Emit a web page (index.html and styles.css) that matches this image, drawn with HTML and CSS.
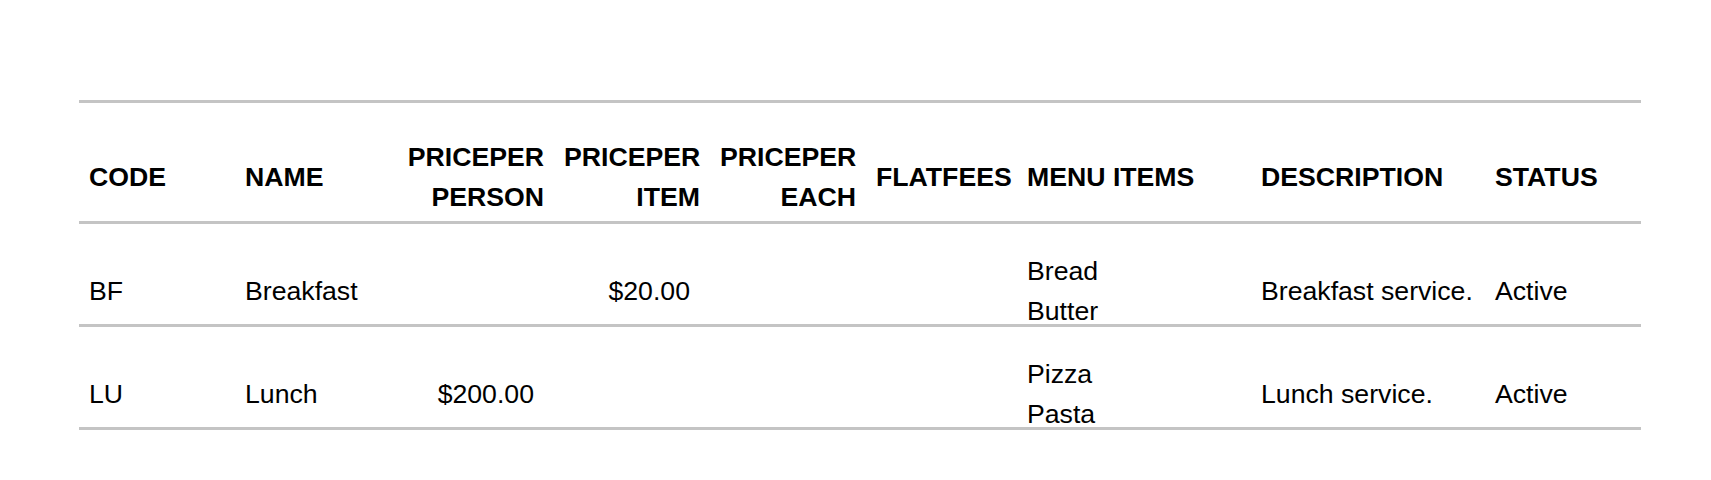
FILE: index.html
```html
<!DOCTYPE html>
<html>
<head>
<meta charset="utf-8">
<link rel="stylesheet" href="styles.css">
</head>
<body>
<div class="page">
  <table class="grid">
    <colgroup>
      <col class="w-code">
      <col class="w-name">
      <col class="w-pp">
      <col class="w-pi">
      <col class="w-pe">
      <col class="w-ff">
      <col class="w-menu">
      <col class="w-desc">
      <col class="w-status">
    </colgroup>
    <thead>
      <tr>
        <th>CODE</th>
        <th>NAME</th>
        <th class="num">PRICEPER PERSON</th>
        <th class="num">PRICEPER ITEM</th>
        <th class="num">PRICEPER EACH</th>
        <th>FLATFEES</th>
        <th>MENU ITEMS</th>
        <th>DESCRIPTION</th>
        <th>STATUS</th>
      </tr>
    </thead>
    <tbody>
      <tr>
        <td>BF</td>
        <td>Breakfast</td>
        <td class="num"></td>
        <td class="num">$20.00</td>
        <td class="num"></td>
        <td></td>
        <td class="menu"><div class="items"><div class="item">Bread</div><div class="item">Butter</div></div></td>
        <td>Breakfast service.</td>
        <td>Active</td>
      </tr>
      <tr>
        <td>LU</td>
        <td>Lunch</td>
        <td class="num">$200.00</td>
        <td class="num"></td>
        <td class="num"></td>
        <td></td>
        <td class="menu"><div class="items"><div class="item">Pizza</div><div class="item">Pasta</div></div></td>
        <td>Lunch service.</td>
        <td>Active</td>
      </tr>
    </tbody>
  </table>
</div>
</body>
</html>
```

FILE: styles.css
```css
html, body {
  margin: 0;
  padding: 0;
  background: #ffffff;
}

.page {
  padding: 100px 70px 0 79px;
  font-family: "Liberation Sans", Arial, sans-serif;
  color: #000000;
}

.grid {
  width: 1562px;
  border-collapse: collapse;
  table-layout: fixed;
  font-size: 26.67px;
  line-height: 40px;
}

.w-code { width: 156px; }
.w-name { width: 161px; }
.w-pp { width: 158px; }
.w-pi { width: 156px; }
.w-pe { width: 156px; }
.w-ff { width: 151px; }
.w-menu { width: 234px; }
.w-desc { width: 234px; }
.w-status { width: 156px; }

.grid thead tr {
  border-top: 3px solid #c4c4c4;
  border-bottom: 3px solid #c4c4c4;
}

.grid tbody tr {
  border-bottom: 3px solid #c4c4c4;
}

.grid th {
  font-weight: bold;
  text-align: left;
  vertical-align: middle;
  padding: 34px 10px 4px 10px;
  white-space: normal;
}

.grid th.num {
  text-align: right;
}

.grid td {
  text-align: left;
  vertical-align: middle;
  padding: 34px 10px 0 10px;
  white-space: nowrap;
}

.grid td.num {
  text-align: right;
  padding-right: 20px;
}

.grid td.menu {
  padding-top: 27px;
}

.items {
  margin-bottom: -7px;
}

.item {
  line-height: 40px;
}
```
